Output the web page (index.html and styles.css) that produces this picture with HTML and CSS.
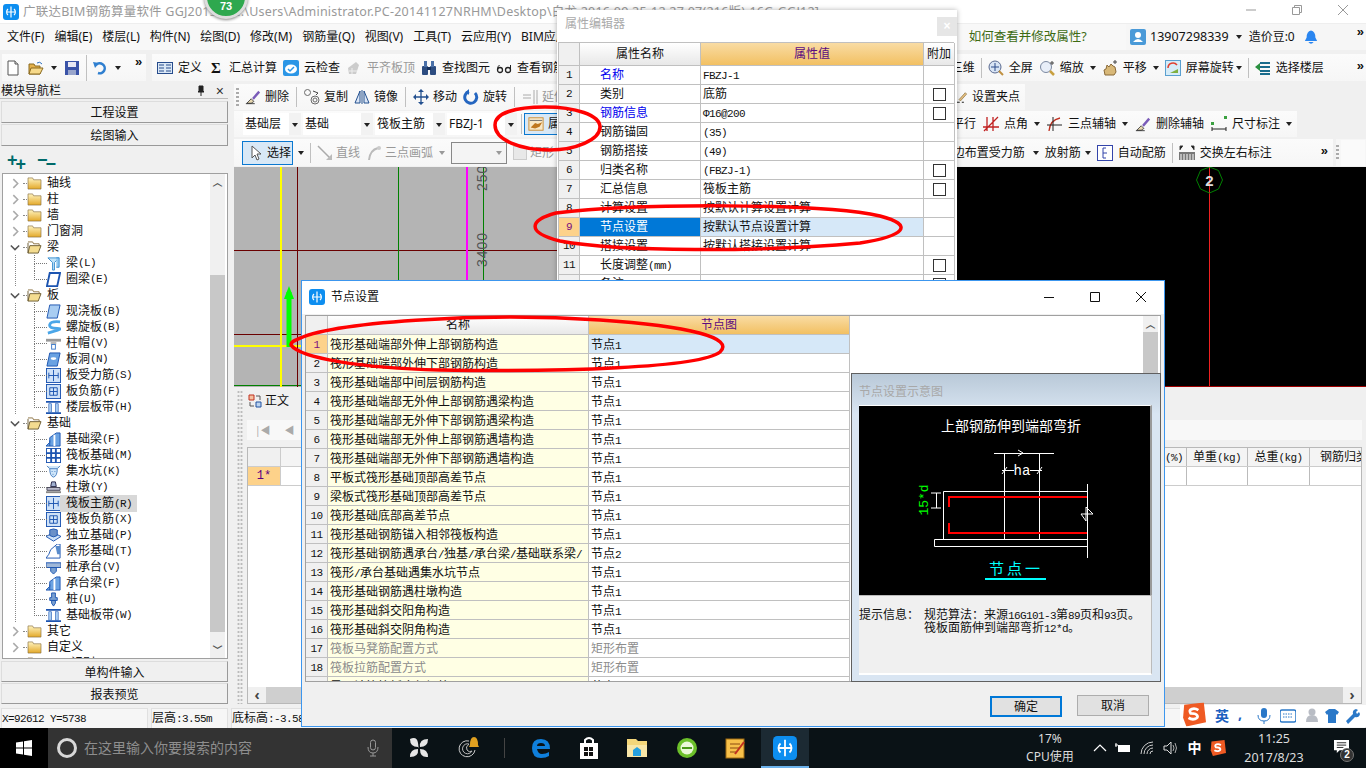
FILE: index.html
```html
<!DOCTYPE html>
<html lang="zh-CN">
<head>
<meta charset="utf-8">
<title>广联达BIM钢筋算量软件</title>
<link rel="stylesheet" href="styles.css">
</head>
<body>
<svg class="sprite" aria-hidden="true">
<defs>
<symbol id="appl" viewBox="0 0 16 16"><rect width="16" height="16" rx="3" fill="#0d8ef0"/><path d="M8 2.500v11M4 8h8M5 5a4 4 0 0 0 0 6M11 5a4 4 0 0 1 0 6" stroke="#fff" stroke-width="1.200" fill="none"/></symbol>
<symbol id="new" viewBox="0 0 16 16"><path d="M3 1h7l3 3v11H3z" fill="#fff" stroke="#555"/><path d="M10 1v3h3" fill="#ddd" stroke="#555"/></symbol>
<symbol id="open" viewBox="0 0 16 16"><path d="M1 4h5l1 2h5v8H1z" fill="#e3b04b" stroke="#8a6a20"/><path d="M3 8h12l-3 6H1z" fill="#f6d98a" stroke="#8a6a20"/><path d="M9 3q3-2 5 1" stroke="#2a6fc0" fill="none"/></symbol>
<symbol id="save" viewBox="0 0 16 16"><rect x="1" y="1" width="14" height="14" fill="#3a53a8"/><rect x="4" y="2" width="8" height="5" fill="#e8e8f4"/><rect x="4" y="10" width="8" height="5" fill="#9aa6cc"/></symbol>
<symbol id="undo" viewBox="0 0 16 16"><path d="M4 5a5 5 0 1 1 2 8" stroke="#2f7fd0" stroke-width="2.500" fill="none"/><path d="M1 2l6 1-4 5z" fill="#2f7fd0"/></symbol>
<symbol id="def" viewBox="0 0 16 16"><rect x=".5" y="2.500" width="15" height="11" fill="#dbe8f6" stroke="#274c8c"/><path d="M2 5h5M2 8h5M2 11h5M9 5h5M9 8h5M9 11h5" stroke="#274c8c"/></symbol>
<symbol id="cloud" viewBox="0 0 16 16"><rect width="16" height="16" rx="2" fill="#2b96e6"/><ellipse cx="8" cy="9" rx="6" ry="4.500" fill="#fff"/><path d="M5 9l2 2 4-4" stroke="#2b96e6" stroke-width="1.500" fill="none"/></symbol>
<symbol id="flat" viewBox="0 0 16 16"><path d="M2 8l8-6 3 3-3 9H3z" fill="#ccc"/><path d="M3 11h8M6 8v6" stroke="#eee"/></symbol>
<symbol id="bino" viewBox="0 0 16 16"><rect x="1" y="6" width="6" height="9" rx="1" fill="#2c4c80"/><rect x="9" y="6" width="6" height="9" rx="1" fill="#2c4c80"/><rect x="3" y="1" width="3" height="6" fill="#4a70a8"/><rect x="10" y="1" width="3" height="6" fill="#4a70a8"/><rect x="6" y="7" width="4" height="3" fill="#15305c"/></symbol>
<symbol id="glass" viewBox="0 0 16 16"><circle cx="4" cy="10" r="2.500" fill="none" stroke="#222" stroke-width="1.300"/><circle cx="12" cy="10" r="2.500" fill="none" stroke="#222" stroke-width="1.300"/><path d="M1.500 10q0-4 2-5M14.500 10V5" stroke="#222" fill="none"/></symbol>
<symbol id="brush" viewBox="0 0 18 16"><path d="M2 15l5-5 3 3-3 2z" fill="#e8d8b0" stroke="#444"/><path d="M8 9l7-8 2 2-7 8z" fill="#7a5bb8"/><path d="M1 15.500h10" stroke="#333"/></symbol>
<symbol id="copy" viewBox="0 0 16 16"><circle cx="3.500" cy="3.500" r="3" fill="none" stroke="#6a6a6a"/><circle cx="11" cy="11" r="4" fill="none" stroke="#6a6a6a"/><circle cx="11" cy="11" r="2" fill="none" stroke="#6a6a6a"/><path d="M9 2l5 2-2 2" stroke="#444" fill="none"/></symbol>
<symbol id="mirror" viewBox="0 0 16 16"><path d="M6 2v12H1zM10 2v12h5z" fill="#dbe6f6" stroke="#23508f"/><path d="M8 1v14" stroke="#23508f"/></symbol>
<symbol id="move" viewBox="0 0 16 16"><path d="M8 1v14M1 8h14" stroke="#23508f" stroke-width="1.300"/><path d="M8 0l3 3H5zM8 16l3-3H5zM0 8l3-3v6zM16 8l-3-3v6z" fill="#23508f"/></symbol>
<symbol id="rotate" viewBox="0 0 16 16"><path d="M12 4a6 6 0 1 1-6-1.500" stroke="#2566c0" stroke-width="3" fill="none"/><path d="M6 0v6L3 3z" fill="#2566c0"/></symbol>
<symbol id="ext" viewBox="0 0 16 16"><path d="M1 6h8M1 9h8M12 1v14M15 1v14" stroke="#aaa"/></symbol>
<symbol id="prop" viewBox="0 0 18 16"><rect x="1" y="1" width="16" height="14" fill="#f8e8c8" stroke="#c98a30"/><path d="M2 4h14" stroke="#666"/><path d="M3 12l5-5 3 1 5-2-3 5-5 2z" fill="#c07820"/></symbol>
<symbol id="tab" viewBox="0 0 16 16"><path d="M2 2h5v5H2z" fill="#f4c0a0" stroke="#c03020"/><path d="M9 9h5v5H9z" fill="#bcd4f0" stroke="#2050a0"/><path d="M9 3h4v4M7 13H3V9" stroke="#555" fill="none"/></symbol>
<symbol id="cursor" viewBox="0 0 16 16"><path d="M5 1v12l3-3 2 5 2-1-2-5h4z" fill="#fff" stroke="#555"/></symbol>
<symbol id="dline" viewBox="0 0 16 16"><path d="M1 1l12 12" stroke="#aaa" stroke-width="1.500"/><path d="M15 15V9l-6 6z" fill="#bbb"/></symbol>
<symbol id="arc" viewBox="0 0 16 16"><path d="M3 15Q4 5 12 3" stroke="#bbb" stroke-width="2" fill="none"/><circle cx="13" cy="3" r="2" fill="#ccc"/></symbol>
<symbol id="full" viewBox="0 0 16 16"><circle cx="7" cy="7" r="6" fill="#d8e4f4" stroke="#5a6a90"/><path d="M7 3v8M3 7h8" stroke="#2a4a8a"/><path d="M11 11l4 4" stroke="#c09040" stroke-width="2"/></symbol>
<symbol id="zoomi" viewBox="0 0 16 16"><circle cx="7" cy="7" r="5.500" fill="#e8eef8" stroke="#7a88a0"/><path d="M11 11l4 4" stroke="#c8a040" stroke-width="2.500"/><path d="M13 1v4M11 3h4" stroke="#444"/></symbol>
<symbol id="hand" viewBox="0 0 16 16"><path d="M3 15l-1-5 2-1 1-4 2 2 2-3 2 2 2 1 1 5-2 3z" fill="#d8b878" stroke="#8a6a38"/><path d="M13 0v4M11 2h4" stroke="#444"/></symbol>
<symbol id="scr" viewBox="0 0 16 16"><rect x=".5" y=".5" width="15" height="15" fill="#d6ecf8" stroke="#5aa0d0"/><path d="M3 8a5 5 0 0 1 9-3" stroke="#e04030" stroke-width="1.500" fill="none"/><path d="M5 13l8-4v4z" fill="#80b040"/></symbol>
<symbol id="floors" viewBox="0 0 16 16"><path d="M5 3h10M5 7h10M5 11h10M5 14h10" stroke="#1a6c8c" stroke-width="2"/><path d="M0 7l5-4v8z" fill="#2a9040"/></symbol>
<symbol id="pencil" viewBox="0 0 16 16"><path d="M3 11L12 1l2 2-9 10z" fill="#e8c080" stroke="#887040"/><path d="M0 15h4M7 15h3" stroke="#222" stroke-width="1.500"/></symbol>
<symbol id="angle" viewBox="0 0 16 16"><path d="M4 1v14M10 1v14M0 11h16M1 15L15 1" stroke="#c02020" stroke-width="1.300"/></symbol>
<symbol id="arcax" viewBox="0 0 16 16"><path d="M2 15Q3 4 13 2" stroke="#c03020" fill="none" stroke-width="1.300"/><path d="M6 1v14M0 9h15" stroke="#222"/></symbol>
<symbol id="dim" viewBox="0 0 16 16"><path d="M1 13h14M1 11v4M15 11v4" stroke="#222"/><rect y="6" width="3" height="3" fill="#3aa040"/><rect x="13" width="3" height="3" fill="#3aa040"/></symbol>
<symbol id="auto" viewBox="0 0 16 16"><rect x=".5" y=".5" width="15" height="15" fill="#fff" stroke="#3344aa"/><path d="M6 3v10M6 3h3M6 8h4M6 13h3" stroke="#3344aa"/></symbol>
<symbol id="ruler" viewBox="0 0 16 16"><rect y="7" width="16" height="8" fill="#777"/><path d="M2 9v6M5 9v6M8 9v6M11 9v6M14 9v6" stroke="#fff"/><path d="M1 5V1h3M15 5V1h-3" stroke="#444"/></symbol>
<symbol id="folder" viewBox="0 0 16 14"><path d="M1 1h5l1 2h8v10H1z" fill="url(#fg)" stroke="#8a7040" stroke-width=".7"/></symbol>
<symbol id="folderopen" viewBox="0 0 16 14"><path d="M1 1h5l1 2h6v2" fill="none" stroke="#8a7040"/><path d="M1 2v11l2-8h12l-3 8H1" fill="#f4dc90" stroke="#6a5a30"/></symbol>
<linearGradient id="fg" x1="0" y1="0" x2="0" y2="1"><stop offset="0" stop-color="#fff4c0"/><stop offset="1" stop-color="#e3a828"/></linearGradient>
<symbol id="t-beam" viewBox="0 0 16 16"><path d="M2 2h12l-5 5v8H7V7z" fill="#bfe2f8" stroke="#3a8ed0"/><path d="M11 2l3 0v10h-3" fill="#8fc8f0" stroke="#3a8ed0"/></symbol>
<symbol id="t-ring" viewBox="0 0 16 16"><path d="M4 1h11l-3 14H1z" fill="#fff" stroke="#1c54b0" stroke-width="2"/></symbol>
<symbol id="t-slab" viewBox="0 0 16 16"><path d="M4 1h11l-3 14H1z" fill="#a9cdf2" stroke="#1c54b0"/></symbol>
<symbol id="t-spiral" viewBox="0 0 16 16"><path d="M15 2Q5 1 4 5t8 4-10 5" fill="none" stroke="#4aa6e8" stroke-width="3"/></symbol>
<symbol id="t-cap" viewBox="0 0 16 16"><rect y="3" width="16" height="3" fill="#999"/><path d="M5 6h6v3H5z" fill="#bbb"/><rect x="6" y="9" width="4" height="5" fill="#fff" stroke="#3a78c8"/></symbol>
<symbol id="t-hole" viewBox="0 0 16 16"><path d="M4 1h11l-3 14H1z" fill="#6aa2e2" stroke="#1c54b0"/><ellipse cx="8" cy="7" rx="3" ry="1.500" fill="#fff"/></symbol>
<symbol id="t-grid" viewBox="0 0 16 16"><rect x=".5" y=".5" width="15" height="15" fill="#cfe2f8" stroke="#1c54b0"/><path d="M8 2v12M3 8h10M3 5v6M13 5v6" stroke="#1c54b0"/></symbol>
<symbol id="t-neg" viewBox="0 0 16 16"><rect x=".5" y=".5" width="15" height="15" fill="#cfe2f8" stroke="#1c54b0"/><path d="M4 4h8v8H4zM4 8h8M8 4v8" stroke="#1c54b0" fill="none"/></symbol>
<symbol id="t-band" viewBox="0 0 16 16"><path d="M0 2h16M0 14h16" stroke="#1c54b0" stroke-width="2"/><rect x="3" y="4" width="3" height="9" fill="#a9cdf2" stroke="#1c54b0" stroke-width=".6"/><rect x="10" y="4" width="3" height="9" fill="#a9cdf2" stroke="#1c54b0" stroke-width=".6"/></symbol>
<symbol id="t-fb" viewBox="0 0 16 16"><path d="M0 15l4-4V6l7-5h4v14zM4 15V9" fill="#6aa2e2" stroke="#1c54b0"/><path d="M9 3v12" stroke="#fff" stroke-width="2"/></symbol>
<symbol id="t-raft" viewBox="0 0 16 16"><rect x=".5" y=".5" width="15" height="15" fill="#fff" stroke="#1c54b0"/><path d="M0 5.500h16M0 10.500h16M5.500 0v16M10.500 0v16" stroke="#1c54b0" stroke-width="2"/></symbol>
<symbol id="t-pit" viewBox="0 0 16 16"><path d="M1 2l3 3h8l3-3M4 5q0 8 4 9 4-1 4-9" fill="#cfe6fa" stroke="#4a80c0"/><path d="M6 8h1M9 8h1M7 11h1" stroke="#4a80c0"/></symbol>
<symbol id="t-pier" viewBox="0 0 16 16"><path d="M6 2h4l1 5H5z" fill="#a0b0d0" stroke="#224"/><path d="M1 8h14v3H1z" fill="#bbc" stroke="#445"/><rect y="12" width="16" height="2" fill="#888"/></symbol>
<symbol id="t-iso" viewBox="0 0 16 16"><path d="M0 9l8-4 8 4-8 5z" fill="#cfe2f8" stroke="#1c54b0"/><path d="M4 8V2q4-2 8 0v6q-4 3-8 0z" fill="#6a90c8" stroke="#1c54b0"/></symbol>
<symbol id="t-strip" viewBox="0 0 16 16"><path d="M0 15l3-4 2-5 7-6h3v15z" fill="#fff" stroke="#1c54b0"/><path d="M10 2h5v9h-3z" fill="#5a8ccc"/></symbol>
<symbol id="t-pcap" viewBox="0 0 16 16"><rect y="3" width="16" height="5" fill="#a0b8d8" stroke="#1c54b0"/><path d="M5 8h6v4l-3 3-3-3z" fill="#7aa0d0" stroke="#1c54b0"/></symbol>
<symbol id="t-pile" viewBox="0 0 16 16"><path d="M6 1h4v5h2v3H4V6h2zM6 9h4v3l-2 3-2-3z" fill="#7aa0d0" stroke="#1c54b0"/></symbol>
<symbol id="chev" viewBox="0 0 8 12"><path d="M1.500 1l5 5-5 5" stroke="#aaa" stroke-width="1.800" fill="none"/></symbol>
<symbol id="chevd" viewBox="0 0 12 8"><path d="M1 1.500l5 5 5-5" stroke="#555" stroke-width="1.800" fill="none"/></symbol>
<symbol id="bell" viewBox="0 0 16 18"><path d="M8 1Q3 2 3 9l-2 4h14l-2-4q0-7-5-8z" fill="#2a86f0"/><path d="M5 14q3 4 6 0z" fill="#2a86f0"/></symbol>
<symbol id="user" viewBox="0 0 16 16"><rect width="16" height="16" rx="2" fill="#4a9ad8"/><circle cx="8" cy="6" r="3" fill="#fff"/><path d="M3 13q5-6 10 0z" fill="#fff"/></symbol>
<symbol id="sogou" viewBox="0 0 22 22"><path d="M2 2l18-2 2 18-18 4-3-8z" fill="#ef5a23"/><path d="M15 7q-3-2-6-1t-1 4q5 0 6 2t-2 3q-3 1-6-1" stroke="#fff" stroke-width="2.600" fill="none"/></symbol>
</defs>
</svg>

<div class="app">
  <header class="titlebar">
    <svg class="ic16"><use href="#appl"/></svg>
    <span class="apptitle">广联达BIM钢筋算量软件 GGJ2013 - [C:\Users\Administrator.PC-20141127NRHM\Desktop\白龙 2016.09.25-12.27.07(216版)-16G-GGJ12]</span>
    <div class="winbtns">
      <svg class="wb" viewBox="0 0 12 12"><path d="M1 6h10" stroke="#999"/></svg>
      <svg class="wb" viewBox="0 0 12 12"><path d="M1.500 3.500h7v7h-7zM3.500 3.500v-2h7v7h-2" stroke="#999" fill="none"/></svg>
      <svg class="wb" viewBox="0 0 12 12"><path d="M1 1l10 10M11 1L1 11" stroke="#999"/></svg>
    </div>
  </header>

  <nav class="menubar">
    <span>文件(F)</span><span>编辑(E)</span><span>楼层(L)</span><span>构件(N)</span><span>绘图(D)</span><span>修改(M)</span><span>钢筋量(Q)</span><span>视图(V)</span><span>工具(T)</span><span>云应用(Y)</span><span>BIM应用</span>
    <span class="howto">如何查看并修改属性?</span>
    <div class="account">
      <svg class="ic16"><use href="#user"/></svg>
      <span class="phone">13907298339</span><i class="drop"></i>
      <span class="beans">造价豆:0</span>
      <svg class="ic16 bell"><use href="#bell"/></svg>
      <span class="more">»</span>
    </div>
  </nav>

  <div class="row0">
    <div class="pill quick">
      <svg class="ic16"><use href="#new"/></svg>
      <svg class="ic16 qopen"><use href="#open"/></svg><i class="drop"></i>
      <svg class="ic16 qsave"><use href="#save"/></svg>
      <i class="sep"></i>
      <svg class="ic16"><use href="#undo"/></svg><i class="drop"></i>
      <span class="more">»</span>
    </div>
    <div class="pill mainbar">
      <div class="group g6">
        <span class="ti"><svg class="ic16"><use href="#def"/></svg>定义</span>
        <span class="ti"><b class="sigma">Σ</b>汇总计算</span>
        <span class="ti"><svg class="ic16"><use href="#cloud"/></svg>云检查</span>
        <span class="ti off"><svg class="ic16"><use href="#flat"/></svg>平齐板顶</span>
        <span class="ti"><svg class="ic16"><use href="#bino"/></svg>查找图元</span>
        <span class="ti"><svg class="ic16"><use href="#glass"/></svg>查看钢筋量</span>
      </div>
      <div class="group g6">
        <span class="ti">三维</span>
        <i class="sep"></i>
        <span class="ti"><svg class="ic16"><use href="#full"/></svg>全屏</span>
        <span class="ti"><svg class="ic16"><use href="#zoomi"/></svg>缩放<i class="drop"></i></span>
        <span class="ti"><svg class="ic16"><use href="#hand"/></svg>平移<i class="drop"></i></span>
        <span class="ti"><svg class="ic16"><use href="#scr"/></svg>屏幕旋转<i class="drop tight"></i></span>
        <i class="sep"></i>
        <span class="ti"><svg class="ic16"><use href="#floors"/></svg>选择楼层</span>
        <span class="more far">»</span>
      </div>
    </div>
  </div>

  <div class="main">
    <aside class="nav">
      <div class="navtitle"><span>模块导航栏</span><span class="navctl"><svg class="pin" viewBox="0 0 10 12"><path d="M3 1h4v5l1 1H2l1-1zM5 7v4" stroke="#222" fill="#222"/></svg><span class="navx">×</span></span></div>
      <button class="navbtn">工程设置</button>
      <button class="navbtn">绘图输入</button>
      <div class="navtools"><span class="plus">+<small>+</small></span><span class="minus">−<small>−</small></span></div>
      <div class="treebox">
        <div class="tree">
          <div class="g"><svg class="chev"><use href="#chev"/></svg><svg class="fol"><use href="#folder"/></svg>轴线</div>
          <div class="g"><svg class="chev"><use href="#chev"/></svg><svg class="fol"><use href="#folder"/></svg>柱</div>
          <div class="g"><svg class="chev"><use href="#chev"/></svg><svg class="fol"><use href="#folder"/></svg>墙</div>
          <div class="g"><svg class="chev"><use href="#chev"/></svg><svg class="fol"><use href="#folder"/></svg>门窗洞</div>
          <div class="g"><svg class="chevd"><use href="#chevd"/></svg><svg class="fol"><use href="#folderopen"/></svg>梁</div>
          <div class="l"><svg class="ti14"><use href="#t-beam"/></svg>梁<i class="m">(L)</i></div>
          <div class="l end"><svg class="ti14"><use href="#t-ring"/></svg>圈梁<i class="m">(E)</i></div>
          <div class="g"><svg class="chevd"><use href="#chevd"/></svg><svg class="fol"><use href="#folderopen"/></svg>板</div>
          <div class="l"><svg class="ti14"><use href="#t-slab"/></svg>现浇板<i class="m">(B)</i></div>
          <div class="l"><svg class="ti14"><use href="#t-spiral"/></svg>螺旋板<i class="m">(B)</i></div>
          <div class="l"><svg class="ti14"><use href="#t-cap"/></svg>柱帽<i class="m">(V)</i></div>
          <div class="l"><svg class="ti14"><use href="#t-hole"/></svg>板洞<i class="m">(N)</i></div>
          <div class="l"><svg class="ti14"><use href="#t-grid"/></svg>板受力筋<i class="m">(S)</i></div>
          <div class="l"><svg class="ti14"><use href="#t-neg"/></svg>板负筋<i class="m">(F)</i></div>
          <div class="l end"><svg class="ti14"><use href="#t-band"/></svg>楼层板带<i class="m">(H)</i></div>
          <div class="g"><svg class="chevd"><use href="#chevd"/></svg><svg class="fol"><use href="#folderopen"/></svg>基础</div>
          <div class="l"><svg class="ti14"><use href="#t-fb"/></svg>基础梁<i class="m">(F)</i></div>
          <div class="l"><svg class="ti14"><use href="#t-raft"/></svg>筏板基础<i class="m">(M)</i></div>
          <div class="l"><svg class="ti14"><use href="#t-pit"/></svg>集水坑<i class="m">(K)</i></div>
          <div class="l"><svg class="ti14"><use href="#t-pier"/></svg>柱墩<i class="m">(Y)</i></div>
          <div class="l sel"><svg class="ti14"><use href="#t-grid"/></svg><span>筏板主筋<i class="m">(R)</i></span></div>
          <div class="l"><svg class="ti14"><use href="#t-neg"/></svg>筏板负筋<i class="m">(X)</i></div>
          <div class="l"><svg class="ti14"><use href="#t-iso"/></svg>独立基础<i class="m">(P)</i></div>
          <div class="l"><svg class="ti14"><use href="#t-strip"/></svg>条形基础<i class="m">(T)</i></div>
          <div class="l"><svg class="ti14"><use href="#t-pcap"/></svg>桩承台<i class="m">(V)</i></div>
          <div class="l"><svg class="ti14"><use href="#t-fb"/></svg>承台梁<i class="m">(F)</i></div>
          <div class="l"><svg class="ti14"><use href="#t-pile"/></svg>桩<i class="m">(U)</i></div>
          <div class="l end"><svg class="ti14"><use href="#t-band"/></svg>基础板带<i class="m">(W)</i></div>
          <div class="g"><svg class="chev"><use href="#chev"/></svg><svg class="fol"><use href="#folder"/></svg>其它</div>
          <div class="g"><svg class="chev"><use href="#chev"/></svg><svg class="fol"><use href="#folder"/></svg>自定义</div>
          <div class="g"><svg class="chev"><use href="#chev"/></svg><svg class="fol"><use href="#folder"/></svg>CAD识别</div>
        </div>
        <div class="vscroll"><span class="sa">︿</span><span class="thumb"></span><span class="sa">﹀</span></div>
      </div>
      <button class="navbtn low first">单构件输入</button>
      <button class="navbtn low">报表预览</button>
    </aside>

    <section class="work">
      <div class="pill r1">
        <div class="group g6">
          <i class="grip"></i>
          <span class="ti"><svg class="ic16"><use href="#brush"/></svg>删除</span><i class="sep"></i>
          <span class="ti"><svg class="ic16"><use href="#copy"/></svg>复制</span>
          <span class="ti"><svg class="ic16"><use href="#mirror"/></svg>镜像</span><i class="sep"></i>
          <span class="ti"><svg class="ic16"><use href="#move"/></svg>移动</span>
          <span class="ti"><svg class="ic16"><use href="#rotate"/></svg>旋转</span><i class="sep"></i>
          <span class="ti off"><svg class="ic16"><use href="#ext"/></svg>延伸</span>
        </div>
        <span class="ti"><svg class="ic11"><use href="#pencil"/></svg>设置夹点</span>
      </div>

      <div class="pill r2">
        <div class="group g0">
          <span class="sbox w46">基础层</span><span class="sarr"></span>
          <span class="sbox w58">基础</span><span class="sarr"></span>
          <span class="sbox w58">筏板主筋</span><span class="sarr"></span>
          <span class="sbox w58">FBZJ-1</span><span class="sarr"></span>
          <i class="sep"></i>
          <span class="active propb"><svg class="ic18"><use href="#prop"/></svg>属性</span>
        </div>
        <div class="group g7">
          <span>平行</span>
          <span class="ti"><svg class="ic16"><use href="#angle"/></svg>点角<i class="drop"></i></span>
          <span class="ti"><svg class="ic16"><use href="#arcax"/></svg>三点辅轴<i class="drop"></i></span>
          <span class="ti"><svg class="ic16"><use href="#brush"/></svg>删除辅轴</span>
          <span class="ti"><svg class="ic16"><use href="#dim"/></svg>尺寸标注<i class="drop"></i></span>
        </div>
      </div>

      <div class="r3wrap">
        <div class="pill r3">
          <div class="group g6">
            <span class="active selb"><svg class="ic16"><use href="#cursor"/></svg>选择</span><i class="drop"></i>
            <i class="sep"></i>
            <span class="ti off"><svg class="ic16"><use href="#dline"/></svg>直线</span>
            <span class="ti off"><svg class="ic16"><use href="#arc"/></svg>三点画弧<i class="drop dim"></i></span>
            <span class="combo"><i class="drop dim"></i></span>
            <span class="ti off"><i class="chk"></i>矩形</span>
          </div>
          <div class="group g6">
            <span class="ti">边布置受力筋<i class="drop"></i></span>
            <span class="ti">放射筋<i class="drop tight"></i></span>
            <span class="ti"><svg class="ic16"><use href="#auto"/></svg>自动配筋</span>
            <i class="sep"></i>
            <span class="ti"><svg class="ic16"><use href="#ruler"/></svg>交换左右标注</span>
            <span class="more far2">»</span>
          </div>
        </div>
        <div class="tail"><i class="vgrip"></i><span class="tailbox"></span></div>
      </div>

      <div class="canvas">
        <svg class="cad" width="1132" height="220" viewBox="0 0 1132 220">
          <rect width="1132" height="220" fill="#000"/>
          <rect width="723" height="220" fill="#b4b4b4"/>
          <path d="M0 83.500h723M0 167.500h723" stroke="#6a0000"/>
          <path d="M0 179h240" stroke="#ffff00" stroke-width="2"/>
          <path d="M0 218.500h723" stroke="#008000"/>
          <path d="M47 0v220" stroke="#ffff00" stroke-width="2"/>
          <path d="M63.500 0v220" stroke="#6a0000"/>
          <path d="M164.500 0v220" stroke="#008000"/>
          <path d="M233 0v220" stroke="#ff00ff" stroke-width="2"/>
          <path d="M249.500 0v220" stroke="#008000"/>
          <path d="M55 180v-55" stroke="#00ff00" stroke-width="5"/>
          <path d="M55 119l5 13H50z" fill="#00ff00"/>
          <text class="cadt" transform="translate(253 24) rotate(-90)">2500</text>
          <text class="cadt" transform="translate(253 100) rotate(-90)">3400</text>
          <path d="M723 219.500h409" stroke="#a00000"/>
          <path d="M975.500 0v219" stroke="#f02020"/>
          <path d="M975.500 0l9 3.500 4 9.500-4 9-9 4-9-4-4-9 4-9.500z" fill="none" stroke="#008000"/>
          <text class="cadn" x="975.500" y="19">2</text>
        </svg>
      </div>

      <div class="lower">
        <div class="lgrip"><i class="dots"></i></div>
        <div class="lmain">
          <div class="tabrow"><svg class="ic16"><use href="#tab"/></svg><span>正文</span></div>
          <div class="navstrip"><span>|◀</span><span>◀</span></div>
          <div class="grid">
            <div class="gr head">
              <span class="gn"></span><span class="gf"><i class="m">(%)</i></span><span class="gc c1">单重<i class="m">(kg)</i></span><span class="gc c2">总重<i class="m">(kg)</i></span><span class="gc c3">钢筋归类</span>
            </div>
            <div class="gr">
              <span class="gn cur">1*</span><span class="gf"></span><span class="gc c1"></span><span class="gc c2"></span><span class="gc c3"></span>
            </div>
            <div class="gspace"></div>
            <div class="hscroll"><span class="ha">‹</span><span class="hthumb"></span><span class="ha">›</span></div>
          </div>
        </div>
      </div>
    </section>
  </div>

  <div class="status">
    <span class="seg s1"><i class="m">X=92612 Y=5738</i></span>
    <span class="seg s2">层高<i class="m">:3.55m</i></span>
    <span class="seg s3">底标高<i class="m">:-3.58m</i></span>
  </div>

  <footer class="taskbar">
    <div class="start"><svg class="winlogo" viewBox="0 0 16 16"><path d="M0 2.500l7-1V7.500H0zM8 1.300L16 0v7.500H8zM0 8.500h7v6l-7-1zM8 8.500h8V16l-8-1.200z" fill="#fff"/></svg></div>
    <div class="search">
      <i class="cortana"></i><span class="stext">在这里输入你要搜索的内容</span>
      <svg class="mic" viewBox="0 0 12 18"><rect x="3.500" y="1" width="5" height="10" rx="2.500" fill="none" stroke="#999"/><path d="M1 8q0 6 5 6t5-6M6 14v3M3 17h6" stroke="#999" fill="none"/></svg>
    </div>
    <div class="slot"><svg class="tb" viewBox="0 0 24 24"><path d="M3 3q7-3 8 4t0 4Q3 11 3 3zM21 3q0 8-8 8-1-8 8-8zM3 21q0-8 8-8 1 8-8 8zM21 21q-8 1-8-8 8 0 8 8z" fill="#e6e6e6"/></svg></div>
    <div class="slot"><svg class="tb" viewBox="0 0 24 24"><path d="M14 5a8 8 0 1 0 6 9" stroke="#ccc" fill="none"/><path d="M14 8a5 5 0 1 0 3 7q-3 2-5-1t2-6z" stroke="#bbb" fill="none"/><path d="M15 9q0-8 4-8t4 8l1 2h-10z" fill="#e0a020"/></svg></div>
    <div class="tsep"><i></i></div>
    <div class="slot"><svg class="tb" viewBox="0 0 24 24"><path d="M3 12Q3 3 12 3q9 0 9 10H8q1 5 5 5 4 0 7-2v4q-3 2-8 2-9 0-9-10zm5-2h8q0-3-4-3t-4 3z" fill="#0f7fdc"/></svg></div>
    <div class="slot"><svg class="tb" viewBox="0 0 24 24"><path d="M3 7h18v16H3z" fill="#fff"/><path d="M8 7V4q4-4 8 0v3" fill="none" stroke="#fff" stroke-width="2"/><path d="M7 11h4v4H7zM12 11h4v4h-4zM7 16h4v4H7zM12 16h4v4h-4z" fill="#111"/></svg></div>
    <div class="slot"><svg class="tb" viewBox="0 0 24 24"><path d="M2 3h9l2 2h9v16H2z" fill="#f4d67a"/><rect x="2" y="9" width="20" height="12" fill="#f8e6a8"/><path d="M8 20v-6l4-3 4 3v6z" fill="#25a0e0"/></svg></div>
    <div class="slot g2"><svg class="tb" viewBox="0 0 24 24"><circle cx="12" cy="12" r="10" fill="#6cc02a"/><circle cx="12" cy="12" r="6.500" fill="#eaf8d8"/><path d="M7 12h10" stroke="#4a9a18" stroke-width="2"/></svg></div>
    <div class="slot"><svg class="tb" viewBox="0 0 24 24"><rect x="3" y="3" width="18" height="19" fill="#f7c04a" stroke="#a06a10"/><path d="M7 8h10M7 12h10M7 16h6" stroke="#8a4a10"/><path d="M12 18L21 6" stroke="#c03020" stroke-width="2"/></svg></div>
    <div class="slot on"><svg class="tb" viewBox="0 0 16 16"><use href="#appl"/></svg></div>
    <div class="tray">
      <div class="cpu"><span>17%</span><span>CPU使用</span></div>
      <div class="tslot"><svg class="t16" viewBox="0 0 16 16"><path d="M2 11l6-6 6 6" stroke="#fff" fill="none" stroke-width="1.200"/></svg></div>
      <div class="tslot"><svg class="t16" viewBox="0 0 16 16"><rect x="3" y="5" width="12" height="7" fill="#fff"/><path d="M0 5h3M1 3v4" stroke="#fff"/></svg></div>
      <div class="tslot"><svg class="t16" viewBox="0 0 16 16"><path d="M2 14a12 12 0 0 1 12-12M5 14a9 9 0 0 1 9-9M8 14a6 6 0 0 1 6-6M11 14a3 3 0 0 1 3-3" stroke="#ccc" fill="none"/></svg></div>
      <div class="tslot"><svg class="t16" viewBox="0 0 16 16"><path d="M1 6h3l4-4v12l-4-4H1z" fill="none" stroke="#ddd"/><path d="M10 5q2 3 0 6M12 3q3 5 0 10" stroke="#aaa" fill="none"/></svg></div>
      <div class="tslot zh">中</div>
      <div class="tslot"><svg class="t16" viewBox="0 0 22 22"><use href="#sogou"/></svg></div>
      <div class="clock"><span>11:25</span><span>2017/8/23</span></div>
      <div class="notif"><svg class="t16 nb" viewBox="0 0 16 16"><path d="M0 1h16v11H6l-3 3v-3H0z" fill="#fff"/><path d="M3 4h10M3 6.500h10M3 9h7" stroke="#222"/></svg><b class="nbadge">2</b></div>
    </div>
  </footer>
</div>

<div class="ime">
  <svg class="ime-s" viewBox="0 0 22 22"><use href="#sogou"/></svg>
  <span class="ime-t">英</span>
  <span class="ime-t dot">,</span>
  <svg class="ime-i" viewBox="0 0 16 16"><rect x="5" y="0" width="6" height="10" rx="3" fill="#2a78c8"/><path d="M2 7q0 6 6 6t6-6M8 13v3" stroke="#2a78c8" fill="none"/></svg>
  <svg class="ime-i" viewBox="0 0 16 16"><rect y="2" width="16" height="12" rx="2" fill="none" stroke="#2a78c8" stroke-width="1.500"/><path d="M3 6h10M3 9h10" stroke="#2a78c8" stroke-dasharray="1.500 1"/></svg>
  <svg class="ime-i" viewBox="0 0 16 16"><circle cx="8" cy="4" r="3.500" fill="#b8bcc4"/><path d="M2 14q0-7 6-7t6 7z" fill="#b8bcc4"/></svg>
  <svg class="ime-i" viewBox="0 0 16 16"><path d="M1 4l4-3h6l4 3-2 3-1-1v9H4V6L3 7z" fill="#2a78c8"/></svg>
  <svg class="ime-i" viewBox="0 0 16 16"><path d="M1 13l7-7q-1-4 3-5l2 1-2 2 1 2 2-2 1 2q-1 4-5 3l-7 7z" fill="#2a78c8"/></svg>
</div>

<div class="badge"><span>73</span></div>

<div class="win prop">
  <div class="wintitle ptitle"><span>属性编辑器</span><span class="pclose">×</span></div>
  <div class="ptable">
    <div class="pr phead"><span class="pn"></span><span class="pk hc">属性名称</span><span class="pv hc ohead">属性值</span><span class="pa hc">附加</span></div>
    <div class="pr"><span class="pn">1</span><span class="pk link">名称</span><span class="pv"><i class="m">FBZJ-1</i></span><span class="pa"></span></div>
    <div class="pr"><span class="pn">2</span><span class="pk">类别</span><span class="pv">底筋</span><span class="pa"><i class="cb"></i></span></div>
    <div class="pr"><span class="pn">3</span><span class="pk link">钢筋信息</span><span class="pv"><i class="m">Φ16@200</i></span><span class="pa"><i class="cb"></i></span></div>
    <div class="pr"><span class="pn">4</span><span class="pk">钢筋锚固</span><span class="pv"><i class="m">(35)</i></span><span class="pa"></span></div>
    <div class="pr"><span class="pn">5</span><span class="pk">钢筋搭接</span><span class="pv"><i class="m">(49)</i></span><span class="pa"></span></div>
    <div class="pr"><span class="pn">6</span><span class="pk">归类名称</span><span class="pv"><i class="m">(FBZJ-1)</i></span><span class="pa"><i class="cb"></i></span></div>
    <div class="pr"><span class="pn">7</span><span class="pk">汇总信息</span><span class="pv">筏板主筋</span><span class="pa"><i class="cb"></i></span></div>
    <div class="pr"><span class="pn">8</span><span class="pk">计算设置</span><span class="pv">按默认计算设置计算</span><span class="pa"></span></div>
    <div class="pr cur"><span class="pn">9</span><span class="pk">节点设置</span><span class="pv">按默认节点设置计算</span><span class="pa"></span></div>
    <div class="pr"><span class="pn">10</span><span class="pk">搭接设置</span><span class="pv">按默认搭接设置计算</span><span class="pa"></span></div>
    <div class="pr"><span class="pn">11</span><span class="pk">长度调整<i class="m">(mm)</i></span><span class="pv"></span><span class="pa"><i class="cb"></i></span></div>
    <div class="pr"><span class="pn">12</span><span class="pk">备注</span><span class="pv"></span><span class="pa"><i class="cb"></i></span></div>
  </div>
</div>

<div class="win node">
  <div class="wintitle ntitle">
    <svg class="ic18"><use href="#appl"/></svg><span>节点设置</span>
    <div class="nbtns">
      <svg class="wb" viewBox="0 0 12 12"><path d="M1 6.500h10" stroke="#111"/></svg>
      <svg class="wb" viewBox="0 0 12 12"><path d="M1.500 1.500h9v9h-9z" stroke="#111" fill="none"/></svg>
      <svg class="wb" viewBox="0 0 12 12"><path d="M1 1l10 10M11 1L1 11" stroke="#111"/></svg>
    </div>
  </div>
  <div class="nbody">
    <div class="nwrap">
      <div class="ntable">
        <div class="nr nhead"><span class="nn"></span><span class="nk hc">名称</span><span class="nv hc ohead">节点图</span></div>
        <div class="nr cur"><span class="nn">1</span><span class="nk">筏形基础端部外伸上部钢筋构造</span><span class="nv">节点<i class="m">1</i></span></div>
        <div class="nr"><span class="nn">2</span><span class="nk">筏形基础端部外伸下部钢筋构造</span><span class="nv">节点<i class="m">1</i></span></div>
        <div class="nr"><span class="nn">3</span><span class="nk">筏形基础端部中间层钢筋构造</span><span class="nv">节点<i class="m">1</i></span></div>
        <div class="nr"><span class="nn">4</span><span class="nk">筏形基础端部无外伸上部钢筋遇梁构造</span><span class="nv">节点<i class="m">1</i></span></div>
        <div class="nr"><span class="nn">5</span><span class="nk">筏形基础端部无外伸下部钢筋遇梁构造</span><span class="nv">节点<i class="m">1</i></span></div>
        <div class="nr"><span class="nn">6</span><span class="nk">筏形基础端部无外伸上部钢筋遇墙构造</span><span class="nv">节点<i class="m">1</i></span></div>
        <div class="nr"><span class="nn">7</span><span class="nk">筏形基础端部无外伸下部钢筋遇墙构造</span><span class="nv">节点<i class="m">1</i></span></div>
        <div class="nr"><span class="nn">8</span><span class="nk">平板式筏形基础顶部高差节点</span><span class="nv">节点<i class="m">1</i></span></div>
        <div class="nr"><span class="nn">9</span><span class="nk">梁板式筏形基础顶部高差节点</span><span class="nv">节点<i class="m">1</i></span></div>
        <div class="nr"><span class="nn">10</span><span class="nk">筏形基础底部高差节点</span><span class="nv">节点<i class="m">1</i></span></div>
        <div class="nr"><span class="nn">11</span><span class="nk">筏形基础钢筋锚入相邻筏板构造</span><span class="nv">节点<i class="m">1</i></span></div>
        <div class="nr"><span class="nn">12</span><span class="nk">筏形基础钢筋遇承台<i class="m">/</i>独基<i class="m">/</i>承台梁<i class="m">/</i>基础联系梁<i class="m">/</i></span><span class="nv">节点<i class="m">2</i></span></div>
        <div class="nr"><span class="nn">13</span><span class="nk">筏形<i class="m">/</i>承台基础遇集水坑节点</span><span class="nv">节点<i class="m">1</i></span></div>
        <div class="nr"><span class="nn">14</span><span class="nk">筏形基础钢筋遇柱墩构造</span><span class="nv">节点<i class="m">1</i></span></div>
        <div class="nr"><span class="nn">15</span><span class="nk">筏形基础斜交阳角构造</span><span class="nv">节点<i class="m">1</i></span></div>
        <div class="nr"><span class="nn">16</span><span class="nk">筏形基础斜交阴角构造</span><span class="nv">节点<i class="m">1</i></span></div>
        <div class="nr dis"><span class="nn">17</span><span class="nk">筏板马凳筋配置方式</span><span class="nv">矩形布置</span></div>
        <div class="nr dis"><span class="nn">18</span><span class="nk">筏板拉筋配置方式</span><span class="nv">矩形布置</span></div>
        <div class="nr"><span class="nn">19</span><span class="nk">是否计算筏板底部钢筋</span><span class="nv">节点<i class="m">1</i></span></div>
      </div>
      <div class="nscroll"><span class="sa">︿</span><span class="thumb"></span></div>
    </div>
    <div class="nfoot"><button class="dbtn ok">确定</button><button class="dbtn">取消</button></div>
  </div>
  <div class="schem">
    <div class="schtitle">节点设置示意图</div>
    <div class="schbox">
      <svg width="292" height="189" viewBox="0 0 292 189">
        <text class="st" x="152" y="25">上部钢筋伸到端部弯折</text>
        <g stroke="#fff" fill="none">
          <path d="M135 47.500h60M145.500 47.500v86M180.500 47.500v86M143 64.500h12M171 64.500h12"/>
          <path d="M84.500 133V85.500h144M228.500 78v74M75.500 133.500h153v7h-153z"/>
          <path d="M77.500 87v15M72 87h10M72 102h10"/>
          <path d="M222 108h12l-7-7v14zM159 44l5 3-5 3M143 68l5-7M178 68l5-7"/>
        </g>
        <path d="M90 101V91h138M90 117v10h138" stroke="#f00" stroke-width="2" fill="none"/>
        <text class="sha" x="163" y="69">ha</text>
        <text class="sgr" transform="translate(69 94) rotate(-90)">15*d</text>
        <text class="scy" x="157" y="168">节点一</text>
        <path d="M126 173h61" stroke="#00ffff" stroke-width="2"/>
      </svg>
    </div>
    <div class="schinfo">
      <span class="lab">提示信息：</span>
      <span class="txt">规范算法：来源<i class="m">16G101-3</i>第<i class="m">89</i>页和<i class="m">93</i>页。<br>筏板面筋伸到端部弯折<i class="m">12*d</i>。</span>
    </div>
  </div>
</div>

<svg class="annot" width="1366" height="768" viewBox="0 0 1366 768" aria-hidden="true">
  <g fill="none" stroke="#f00" stroke-width="3.500">
    <path d="M600 127C600 115 575 107 545 107C515 107 495 113 495 125C495 140 520 150 550 150C575 150 600 140 600 127Z"/>
    <path d="M556 213C640 203 820 203 880 216C915 225 905 236 860 243C760 252 620 252 560 241C525 232 530 220 556 213Z"/>
    <path d="M296 340C330 322 480 312 600 320C690 326 735 338 720 352C700 368 560 372 440 370C360 368 300 358 291 345C291 342 293 341 296 340Z"/>
  </g>
</svg>
</body>
</html>
```
FILE: styles.css
```css
* { box-sizing: border-box; }
html, body { margin: 0; padding: 0; }
body {
  width: 1366px; height: 768px; overflow: hidden; position: relative;
  background: #f0f0f0; color: #111;
  font: 12px/16px "Noto Sans", "Noto Sans CJK SC", sans-serif;
}
.sprite { position: absolute; width: 0; height: 0; }
i { font-style: normal; }
.m { font-family: "Liberation Mono", monospace; font-size: 11px; letter-spacing: -.6px; }
.app { display: flex; flex-direction: column; width: 1366px; height: 768px; }
svg { flex: none; display: block; }
.ic16 { width: 16px; height: 16px; }
.ic11 { width: 11px; height: 13px; }
.ic18 { width: 16px; height: 16px; }

/* title */
.titlebar { height: 23px; background: #fff; display: flex; align-items: center; padding-left: 3px; gap: 4px; position: relative; flex: none; overflow: hidden; }
.apptitle { color: #999; font-size: 12.5px; white-space: nowrap; letter-spacing: .22px; }
.winbtns { position: absolute; right: 0; top: 0; height: 23px; display: flex; align-items: center; background: #fff; }
.wb { width: 12px; height: 12px; margin: 0 17px; }
.winbtns .wb { margin: 0 17px 3px; }

/* menu */
.menubar { height: 27px; flex: none; background: #f8f8f8; display: flex; align-items: center; gap: 10px; padding-left: 7px; border-top: 1px solid #eee; white-space: nowrap; }
.howto { color: #3d6b12; font-size: 12.5px; margin-left: 391px; }
.account { position: absolute; left: 1126px; top: 24px; width: 240px; height: 26px; background: #f6f6f6; display: flex; align-items: center; padding-left: 4px; }
.phone { margin-left: 4px; font-size: 12.5px; }
.beans { margin-left: 7px; }
.bell { margin-left: 9px; width: 14px; height: 17px; }
.more { font-family: "Liberation Sans", sans-serif; font-size: 13px; font-weight: 700; line-height: 10px; align-self: flex-start; margin-top: 3px; }
.account .more { margin-left: auto; margin-right: 2px; }
.drop { display: inline-block; width: 0; height: 0; border: 3px solid transparent; border-top: 4px solid #222; border-bottom: 0; margin-left: 7px; flex: none; }
.ti .drop { margin-left: 1px; }
.drop.dim { border-top-color: #999; }
.ti .drop.tight { margin-left: -3px; }
.r3 .ti .drop { margin-left: 3px; }
.r3 .ti .drop.tight { margin-left: -1px; }
.sep { width: 1px; height: 20px; background: #c0c0c0; flex: none; }

/* toolbars */
.pill { background: linear-gradient(#fbfbfb, #f6f6f6); display: flex; align-items: center; white-space: nowrap; }
.group { display: flex; align-items: center; gap: 7px; }
.ti { display: flex; align-items: center; gap: 5px; flex: none; }
.off { color: #999; }
.row0 { height: 33px; flex: none; display: flex; gap: 6px; padding: 4px 0 2px 2px; background: #f0f0f0; }
.quick { width: 144px; padding-left: 3px; height: 27px; flex: none; }
.qopen { margin-left: 7px; }
.qsave { margin-left: 7px; }
.quick .sep { margin: 0 5px 0 6px; height: 26px; }
.quick .more { margin: 3px 0 0 14px; }
.mainbar { flex: 1; justify-content: space-between; padding-left: 5px; height: 27px; }
.sigma { width: 16px; text-align: center; font-family: "Liberation Serif", serif; font-size: 15px; }
.far { margin-left: 27px; margin-right: 2px; }
.main { flex: 1; display: flex; min-height: 0; }

/* nav */
.nav { width: 229px; flex: none; display: flex; flex-direction: column; padding: 1px 1px 1px 0; background: #f0f0f0; }
.navtitle { height: 15px; line-height: 14px; display: flex; justify-content: space-between; border: 1px solid #bbb; border-width: 0 0 1px 0; padding-left: 1px; margin-bottom: 2px; flex: none; }
.navctl { display: flex; align-items: center; gap: 10px; margin-right: 4px; }
.pin { width: 10px; height: 12px; }
.navx { font-family: "Liberation Sans", sans-serif; font-size: 14px; color: #333; }
.navbtn { height: 22px; flex: none; margin: 0 0 1px 1px; border: 1px solid #bbb; border-top-color: #ddd; border-left-color: #ddd; border-right-color: #999; border-bottom-color: #999; background: #f0f0f0; padding: 2px 0 0; font: inherit; color: #111; text-align: center; }
.navbtn.low { height: 21px; }
.navbtn.first { margin-top: 2px; }
.navtools { height: 26px; flex: none; display: flex; gap: 11px; align-items: center; padding-left: 7px; color: #006a6a; font: 700 18px/18px "Liberation Sans", sans-serif; }
.navtools small { font-size: 18px; position: relative; top: 4px; margin-left: -2px; }
.treebox { flex: 1; min-height: 0; display: flex; border: 1px solid #a0a0a0; margin: 0 0 0 2px; background: #fff; overflow: hidden; }
.tree { flex: 1; padding-top: 1px; overflow: hidden; }
.tree .g, .tree .l { height: 16px; display: flex; align-items: center; white-space: nowrap; position: relative; }
.g { padding-left: 9px; }
.chev { width: 7px; height: 11px; margin-right: 8px; }
.chevd { width: 10px; height: 7px; margin: 0 7px 0 -2px; }
.fol { width: 15px; height: 13px; margin-right: 5px; }
.g::before { content: ""; position: absolute; left: 20px; top: 8px; width: 4px; border-top: 1px dotted #888; }
.tree .l { padding-left: 43px; background: repeating-linear-gradient(#888 0 1px, transparent 1px 2px) 12px 0 / 1px 100% no-repeat; }
.ti14 { width: 15px; height: 15px; margin-right: 5px; flex: none; }
.l::before { content: ""; position: absolute; left: 31px; top: 0; height: 8px; width: 12px; border-left: 1px dotted #777; border-bottom: 1px dotted #777; }
.l::after { content: ""; position: absolute; left: 31px; top: 8px; height: 8px; border-left: 1px dotted #777; }
.l.end::after { display: none; }
.l.sel span { background: #d8d8d8; margin-left: -6px; padding: 0 5px 0 6px; line-height: 16px; }
.l.sel svg { background: #eee; }
.vscroll { width: 15px; margin: 0 2px 0 0; flex: none; display: flex; flex-direction: column; align-items: stretch; background: #f0f0f0; }
.sa { height: 16px; flex: none; font-size: 10px; line-height: 16px; text-align: center; color: #555; font-weight: 700; }
.vscroll .thumb { background: #c8c8c8; margin-top: 85px; height: 357px; display: block; flex: none; }
.vscroll .sa:last-child { margin-top: auto; }

/* work */
.work { flex: 1; min-width: 0; display: flex; flex-direction: column; padding-left: 5px; }
.r1 { width: 791px; height: 26px; margin-top: 1px; justify-content: space-between; padding: 0 5px 0 2px; flex: none; }
.r1 .ti { gap: 4px; }
.r1 .sep { margin: 0 1px; }
.g6 { gap: 6px; }
.g0 { gap: 0; }
.g7 { gap: 7px; }
.grip { width: 3px; height: 18px; background: repeating-linear-gradient(#aaa 0 2px, transparent 2px 4px); }
.r2 { width: 1063px; height: 26px; margin-top: 1px; justify-content: space-between; padding: 0 5px 0 9px; flex: none; }
.sbox { height: 22px; line-height: 22px; background: #fff; padding-left: 2px; flex: none; }
.w46 { width: 46px; }
.w58 { width: 58px; }
.sarr { width: 12px; height: 22px; background: #f2f2f2; position: relative; margin-right: 2px; flex: none; }
.sarr::after { content: ""; position: absolute; left: 3px; top: 10px; border: 3px solid transparent; border-top: 4px solid #222; border-bottom: 0; }
.r2 .sep { margin: 0 2px; }
.active { display: flex; align-items: center; gap: 4px; border: 1px solid #0a78d0; background: #d8e8f6; flex: none; }
.propb { height: 22px; padding-left: 3px; width: 60px; }
.r3wrap { display: flex; gap: 3px; margin-top: 2px; height: 27px; flex: none; }
.r3 { width: 1099px; height: 27px; justify-content: space-between; padding: 0 5px 0 8px; flex: none; }
.r3 .ti.off { gap: 3px; }
.selb { width: 51px; height: 24px; padding-left: 4px; gap: 4px; }
.selb + .drop { margin-left: -1px; }
.combo { width: 56px; height: 22px; border: 1px solid #888; background: #f4f4f4; display: flex; align-items: center; justify-content: flex-end; padding-right: 4px; }
.chk { width: 14px; height: 14px; background: #e8e8e8; border: 1px solid #ccc; }
.far2 { margin-left: 43px; }
.tail { flex: 1; display: flex; gap: 2px; background: #f6f6f6; align-items: center; }
.vgrip { width: 3px; height: 16px; background: repeating-linear-gradient(#aaa 0 2px, transparent 2px 4px); }
.tailbox { width: 24px; height: 26px; background: #fafafa; }
.canvas { height: 220px; margin-top: 1px; flex: none; overflow: hidden; }
.cadt { font: 14px "Liberation Sans", sans-serif; fill: #555; letter-spacing: 1px; }
.cadn { font: 700 15px "Liberation Sans", sans-serif; fill: #ddd; text-anchor: middle; }

/* lower */
.lower { flex: 1; min-height: 0; display: flex; }
.lgrip { width: 13px; flex: none; padding: 3px 0 2px 3px; }
.dots { display: block; width: 6px; height: 100%; background: radial-gradient(circle, #bbb 1px, transparent 1.2px) 0 0 / 3px 4px; }
.lmain { flex: 1; min-width: 0; display: flex; flex-direction: column; padding: 4px 4px 2px 0; }
.tabrow { height: 20px; flex: none; display: flex; align-items: center; gap: 2px; padding-left: 0; }
.navstrip { height: 20px; margin-top: 9px; flex: none; background: #f8f8f8; display: flex; gap: 14px; padding-left: 8px; color: #aaa; line-height: 20px; font-size: 10px; }
.grid { flex: 1; min-height: 0; margin-top: 7px; border: 1px solid #b8b8b8; background: #fff; display: flex; flex-direction: column; }
.gr { height: 19px; display: flex; flex: none; border-bottom: 1px solid #ccc; }
.gr.head { background: #f4f4f4; }
.gn { width: 33px; flex: none; text-align: center; border-right: 1px solid #ccc; background: #f0f0f0; line-height: 18px; }
.gn.cur { background: #fdd28a; color: #5a0080; font-family: "Liberation Mono", monospace; }
.gf { flex: 1; text-align: right; padding-right: 3px; line-height: 18px; border-right: 1px solid #bbb; }
.gc { flex: none; text-align: center; line-height: 18px; border-right: 1px solid #bbb; overflow: hidden; white-space: nowrap; }
.c1 { width: 61px; }
.c2 { width: 62px; }
.c3 { width: 51px; border-right: 0; text-align: left; padding-left: 10px; }
.gspace { flex: 1; }
.hscroll { height: 16px; flex: none; display: flex; background: #f0f0f0; line-height: 15px; }
.ha { width: 18px; text-align: center; font-weight: 700; font-size: 14px; color: #444; }
.hthumb { flex: 1; background: #cfcfcf; }

/* status */
.status { height: 22px; flex: none; display: flex; gap: 3px; padding: 2px 0 0 1px; background: #f0f0f0; line-height: 18px; }
.seg { display: block; border: 1px solid #e0e0e0; border-bottom: 0; background: #f6f6f6; padding-left: 0; white-space: nowrap; overflow: hidden; }
.s1 { width: 147px; }
.s2 { width: 77px; }
.s3 { flex: 1; }

/* taskbar */
.taskbar { height: 40px; flex: none; background: #0a1216; display: flex; color: #fff; }
.start { width: 48px; flex: none; background: #000; display: flex; align-items: center; justify-content: center; }
.winlogo { width: 16px; height: 16px; }
.search { width: 344px; flex: none; background: #333; display: flex; align-items: center; padding-left: 9px; color: #8e8e8e; margin-right: 3px; }
.cortana { width: 20px; height: 20px; border-radius: 50%; border: 3px solid #d8d8d8; margin-right: 7px; }
.stext { font-size: 14px; }
.mic { width: 12px; height: 18px; margin-left: auto; margin-right: 13px; }
.slot { width: 48px; flex: none; display: flex; align-items: center; justify-content: center; position: relative; }
.slot.g2 { margin-left: 2px; }
.slot.on { background: #1c2a33; margin-left: 2px; }
.slot.on::after { content: ""; position: absolute; left: 0; right: 0; bottom: 0; height: 2px; background: #6cb2ec; }
.tb { width: 24px; height: 24px; }
.tsep { width: 26px; display: flex; align-items: center; justify-content: center; }
.tsep i { width: 1px; height: 20px; background: #444; }
.tray { margin-left: auto; display: flex; align-items: center; height: 40px; }
.cpu { width: 70px; display: flex; flex-direction: column; align-items: center; line-height: 18px; margin-right: 3px; color: #ddd; }
.tslot { width: 23.700px; display: flex; justify-content: center; flex: none; }
.t16 { width: 16px; height: 16px; }
.zh { font-size: 14px; font-weight: 700; }
.clock { width: 80px; margin-left: 4px; display: flex; flex-direction: column; align-items: center; line-height: 19px; font-size: 12.500px; color: #ddd; }
.notif { width: 52px; position: relative; display: flex; justify-content: center; padding-left: 2px; }
.nb { width: 15px; height: 15px; margin-top: -4px; }
.nbadge { position: absolute; left: 26px; top: 5px; width: 14px; height: 14px; border-radius: 50%; background: #333; border: 1px solid #777; font: 700 10px/12px "Liberation Sans", sans-serif; text-align: center; }

/* floating */
.ime { position: absolute; left: 1180px; top: 705px; width: 186px; height: 22px; background: #fff; display: flex; align-items: center; gap: 8px; }
.ime-s { width: 24px; height: 25px; margin-top: -4px; margin-left: 2px; }
.ime-t { color: #1c60c0; font-size: 14px; font-weight: 700; margin-left: 1px; }
.ime-t.dot { margin-top: -4px; width: 10px; }
.ime-i { width: 16px; height: 16px; }
.ime-i:nth-last-child(2) { margin-left: -4px; }
.ime-i:last-child { margin-left: -3px; }
.badge { position: absolute; left: 204px; top: -25px; width: 44px; height: 44px; border-radius: 50%; background: #2ea84e; border: 3px solid #ddd; box-shadow: 0 1px 3px #888; color: #fff; font: 700 11px/14px "Liberation Sans", sans-serif; display: flex; align-items: flex-end; justify-content: center; padding-bottom: 3px; }

.win { position: absolute; background: #fff; }
.wintitle { display: flex; align-items: center; flex: none; }
.prop { left: 557px; top: 10px; width: 400px; height: 276px; box-shadow: 0 0 5px rgba(0,0,0,.3); }
.ptitle { height: 28px; margin-bottom: 4px; padding: 0 0 0 8px; color: #aaa; font-size: 12px; justify-content: space-between; }
.pclose { width: 20px; height: 19px; background: #e6e6e6; color: #fff; text-align: center; font: 700 12px/19px "Liberation Sans", sans-serif; align-self: flex-start; margin-top: 7px; }
.ptable { margin: 1px 0 0 1px; border-top: 1px solid #c0c0c0; border-left: 1px solid #c0c0c0; width: 396px; }
.pr { display: grid; grid-template-columns: 21px 121px 223px 31px; height: 19px; }
.pr > span { border-right: 1px solid #c0c0c0; border-bottom: 1px solid #c0c0c0; line-height: 18px; white-space: nowrap; overflow: hidden; }
.phead { height: 23px; }
.phead > span { line-height: 22px; }
.hc { text-align: center; background: linear-gradient(#fff, #e8e8e8); }
.ohead { background: linear-gradient(#f9dca4, #f2c062); color: #5a0a80; }
.pn { background: #f0f0f0; text-align: center; font: 11px/18px "Liberation Mono", monospace; letter-spacing: -.6px; }
.pr > .pn { line-height: 18px; }
.pk { padding-left: 20px; }
.pv { padding-left: 2px; }
.phead .pk, .phead .pv { padding: 0; }
.link { color: #0000ee; }
.pa { display: flex; align-items: center; justify-content: center; }
.cb { width: 13px; height: 13px; border: 1px solid #333; background: #fff; }
.pr.cur .pn, .nr.cur .nn { background: #fdd28a; color: #7a1080; }
.pr.cur .pk { background: #0078d7; color: #fff; }
.pr.cur .pv, .nr.cur .nv { background: #d6e8f8; }

.node { left: 301px; top: 280px; width: 864px; height: 447px; border: 1px solid #3c96ee; display: flex; flex-direction: column; background: #f0f0f0; }
.ntitle { height: 33px; background: #fff; padding: 0 0 2px 7px; gap: 6px; position: relative; }
.nbtns { margin-left: auto; display: flex; margin-right: 0; }
.nbtns .wb { margin: 0 17px; }
.nbody { flex: 1; min-height: 0; padding: 1px 3px 0; display: flex; flex-direction: column; }
.nwrap { height: 367px; flex: none; background: #fff; border: 1px solid #a0a0a0; display: flex; padding-right: 2px; }
.ntable { flex: 1; overflow: hidden; }
.nr { display: grid; grid-template-columns: 22px 261px 261px; height: 19px; }
.nr > span { border-right: 1px solid #c0c0c0; border-bottom: 1px solid #c0c0c0; line-height: 18px; padding-top: 1px; white-space: nowrap; overflow: hidden; }
.nhead { height: 19px; }
.nhead > span { padding-top: 0; }
.nk { background: #ffffe4; padding-left: 2px; }
.nhead .nk { background: linear-gradient(#fff, #e8e8e8); padding: 0; }
.nhead .nv { padding: 0; }
.nv { padding-left: 2px; }
.nn { background: #f0f0f0; text-align: center; font: 11px/18px "Liberation Mono", monospace; letter-spacing: -.6px; }
.dis .nk, .dis .nv { color: #8c8c8c; }
.nscroll { width: 15px; flex: none; background: #f0f0f0; display: flex; flex-direction: column; }
.nscroll .thumb { display: block; background: #c8c8c8; height: 150px; }
.nfoot { flex: 1; display: flex; justify-content: flex-end; gap: 15px; padding: 13px 12px 0 0; align-items: flex-start; }
.dbtn { width: 72px; height: 21px; border: 1px solid #adadad; background: #e1e1e1; font: inherit; color: #111; padding: 0; }
.dbtn.ok { border: 2px solid #0078d7; margin-top: 1px; }

.schem { position: absolute; left: 549px; top: 92px; width: 310px; height: 309px; border: 1px solid #606060; background: linear-gradient(#b9c9d8, #d9e5f2 40px); padding: 0 8px 0 7px; display: flex; flex-direction: column; }
.schtitle { height: 31px; line-height: 36px; color: #a8a8a8; flex: none; font-size: 12px; }
.schbox { height: 190px; width: 293px; flex: none; background: #000; border-top: 1px solid #fff; border-right: 2px solid #999; overflow: hidden; }
.st { font: 14px "Noto Sans CJK SC", sans-serif; fill: #fff; text-anchor: middle; }
.sha { font: 14px "Liberation Mono", monospace; fill: #fff; text-anchor: middle; }
.sgr { font: 13px "Liberation Mono", monospace; fill: #00ff00; text-anchor: middle; }
.scy { font: 15px "Noto Sans CJK SC", sans-serif; fill: #00ffff; text-anchor: middle; letter-spacing: 3px; }
.schinfo { flex: 1; margin-bottom: 6px; border-top: 1px solid #bbb; border-bottom: 2px solid #fff; border-right: 1px solid #bbb; background: #f0f0f0; display: flex; padding-top: 13px; line-height: 12px; width: 293px; }
.lab { width: 65px; flex: none; white-space: nowrap; }
.txt { white-space: nowrap; }

.annot { position: absolute; left: 0; top: 0; pointer-events: none; }
```
